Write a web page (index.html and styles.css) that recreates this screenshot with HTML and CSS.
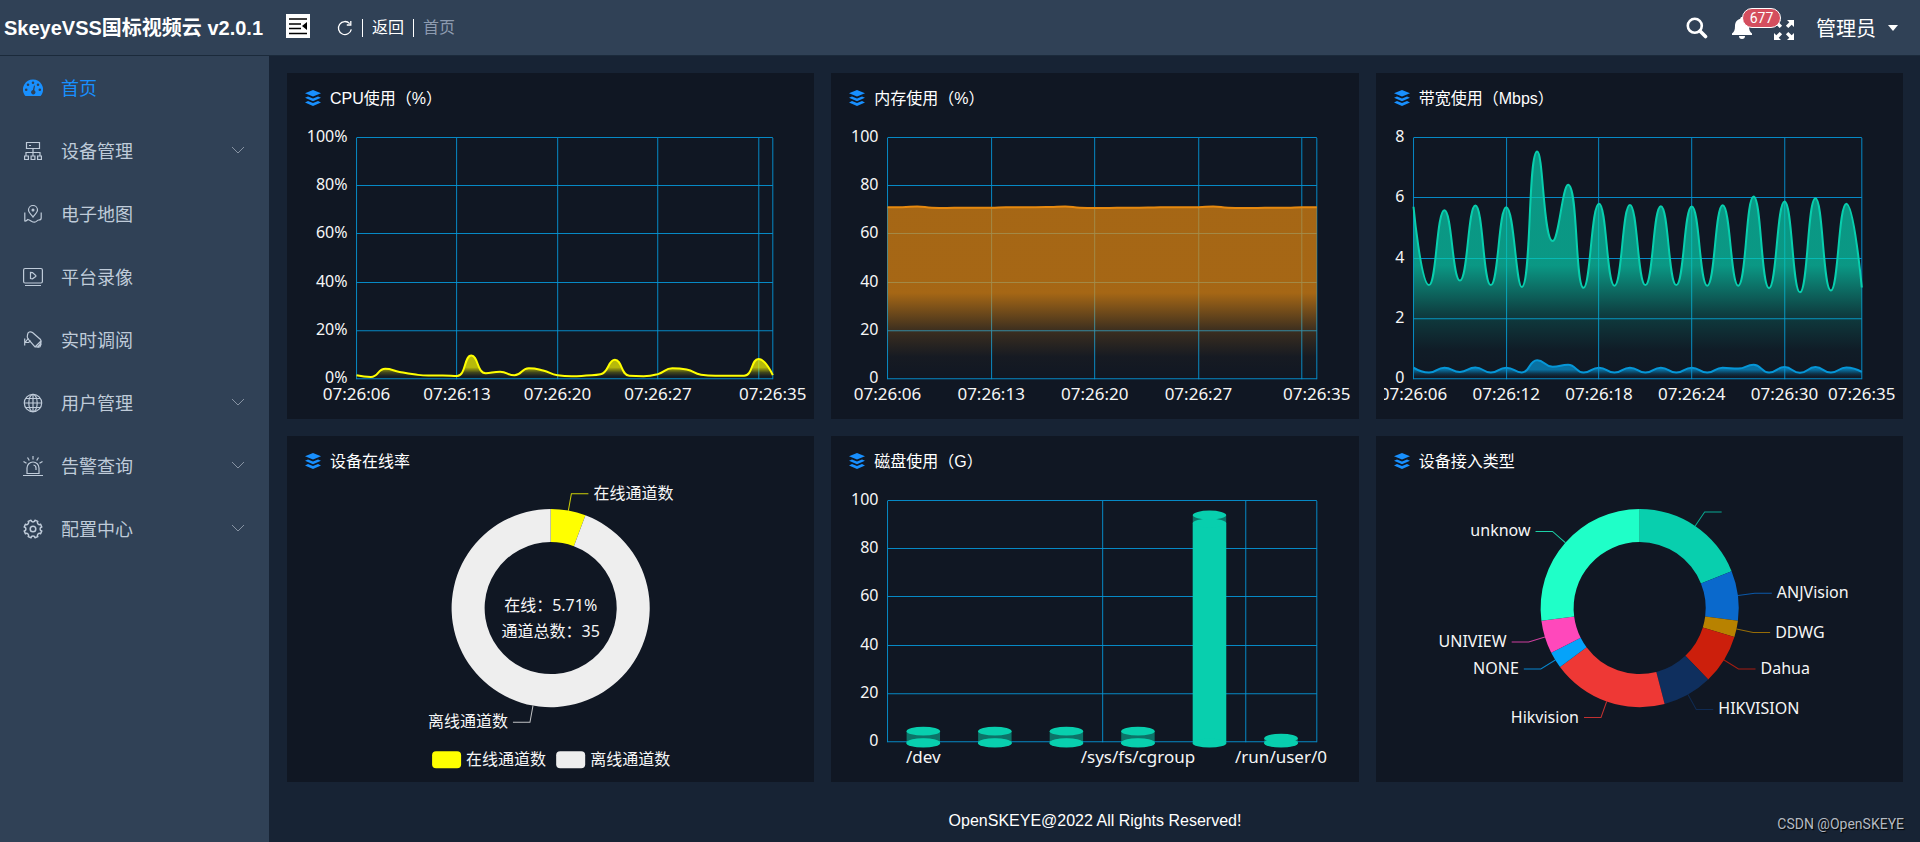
FILE: index.html
```html
<!DOCTYPE html>
<html lang="zh-CN">
<head>
<meta charset="utf-8">
<title>SkeyeVSS国标视频云</title>
<link rel="stylesheet" href="styles.css">
</head>
<body>
<svg class="sprite" aria-hidden="true">
  <symbol id="i-layers" viewBox="0 0 16 16"><path d="M8 0 16 3.200 8 6.600 0 3.200Z"/><path d="M0 7.800 3 6.400 8 8.400 13 6.400 16 7.800 8 11.300Z"/><path d="M0 12.400 3 11 8 13.100 13 11 16 12.400 8 16Z"/></symbol>
  <symbol id="i-chevron" viewBox="0 0 14 8"><path d="M1 1 7 7 13 1" fill="none" stroke="currentColor"/></symbol>
</svg>

<header class="topbar">
  <h1 class="brand">SkeyeVSS国标视频云 v2.0.1</h1>
  <button class="icon-btn fold" aria-label="折叠菜单">
    <svg width="24" height="24" viewBox="0 0 24 24"><path fill="#fff" d="M0 0h24v24H0z"/><path d="M3 5h18M3 10h12M3 14.500h12M3 19.500h18" stroke="#000" stroke-width="1.700"/><path d="M21 8v8l-5-4z"/></svg>
  </button>
  <nav class="crumbs">
    <button class="icon-btn" aria-label="刷新">
      <svg width="16" height="16" viewBox="0 0 16 16" fill="none" stroke="#fff" stroke-width="1.300"><path d="M14.300 9.300A6.500 6.500 0 1 1 12.700 3.600"/><path d="M13.800 1v4h-4"/></svg>
    </button>
    <a class="crumb" href="#back">返回</a>
    <span class="crumb current">首页</span>
  </nav>
  <div class="tools">
    <button class="icon-btn" aria-label="搜索">
      <svg width="22" height="22" viewBox="0 0 22 22" fill="none" stroke="#fff"><circle cx="8.800" cy="8.800" r="7" stroke-width="2.600"/><path d="m14 14 5.500 5.500" stroke-width="3.600" stroke-linecap="round"/></svg>
    </button>
    <button class="icon-btn bell" aria-label="通知">
      <svg width="20" height="22" viewBox="0 0 20 22" fill="#fff"><path d="M10 0c1 0 1.700.7 1.700 1.700C15 2.500 17 5.200 17 9c0 4 1 6 3 7.500V18H0v-1.500C2 15 3 13 3 9c0-3.800 2-6.500 5.300-7.300C8.300.7 9 0 10 0zM7 19h6a3 3 0 0 1-6 0z"/></svg>
      <span class="badge">677</span>
    </button>
    <button class="icon-btn expand" aria-label="全屏">
      <svg width="20" height="20" viewBox="0 0 20 20" fill="#fff"><path d="M20 0v7l-2.300-2.300-3.400 3.400-2.400-2.400 3.400-3.400L13 0z"/><path d="M0 0v7l2.300-2.300 3.400 3.400 2.400-2.400-3.400-3.400L7 0z"/><path d="M20 20v-7l-2.300 2.300-3.400-3.400-2.400 2.400 3.400 3.400L13 20z"/><path d="M0 20v-7l2.300 2.300 3.400-3.400 2.400 2.400-3.400 3.400L7 20z"/></svg>
    </button>
    <button class="icon-btn user">管理员
      <svg width="10" height="6" viewBox="0 0 10 6" fill="#fff"><path d="M0 0h10L5 6z"/></svg>
    </button>
  </div>
</header>

<div class="shell">
  <aside class="sidebar">
    <nav class="menu">
      <a class="item active" href="#home">
        <svg class="ico" viewBox="0 0 20 20"><path fill="currentColor" fill-rule="evenodd" d="M10 1.500a10 10 0 0 0-8.700 15c.4.800.9 1.500 1.700 1.500h14c.8 0 1.300-.7 1.700-1.500A10 10 0 0 0 10 1.500zM10 3.500a1.300 1.300 0 1 1 0 2.600 1.300 1.300 0 0 1 0-2.600zM5 5.500a1.300 1.300 0 1 1 0 2.600 1.300 1.300 0 0 1 0-2.600zM15 5.500a1.300 1.300 0 1 1 0 2.600 1.300 1.300 0 0 1 0-2.600zM3.200 10.500a1.300 1.300 0 1 1 0 2.600 1.300 1.300 0 0 1 0-2.600zM16.800 10.500a1.300 1.300 0 1 1 0 2.600 1.300 1.300 0 0 1 0-2.600zM11 7.500l1 .2-.7 4.600a2.200 2.200 0 1 1-1.400-.2z"/></svg>首页</a>
      <a class="item" href="#device">
        <svg class="ico" viewBox="0 0 20 20"><path d="M3.500 1.500h13v6h-13zM6 4.500h2M10 7.500V15M3 15v-3.500h14V15M1.600 15h3.800v3.500H1.600zM8.100 15h3.800v3.500H8.100zM14.600 15h3.800v3.500h-3.800z"/></svg>设备管理<svg class="chev"><use href="#i-chevron"/></svg></a>
      <a class="item" href="#map">
        <svg class="ico" viewBox="0 0 20 20"><path d="M10 13C7 9.500 5.500 8 5.500 6a4.500 4.500 0 0 1 9 0c0 2-1.500 3.500-4.500 7zM1.800 8.500v8.500c1 .3 1.700 0 3-1.500 3 .5 4 3 7 2.700 1.500-.2 2.500-2.200 4-2.200 2 0 2.400-1 2.400-2V8.500"/><circle cx="10" cy="6" r=".9"/></svg>电子地图</a>
      <a class="item" href="#record">
        <svg class="ico" viewBox="0 0 20 20"><rect x=".6" y="1.500" width="18.800" height="14.500" rx="1.500"/><path d="M7.500 5.500v6l2 .3 3.300-2.300v-1L9.500 5.600zM2 18.500h16"/></svg>平台录像</a>
      <a class="item" href="#live">
        <svg class="ico" viewBox="0 0 20 20"><path d="M4.500 5C4.500 2 7.500 1 9.500 2.500l8 7c1.500 2 .5 3.500-.5 5l-2.500 2.500-2.500-.2-7-8C4 7.500 4 6.500 4.500 5zM1.700 8.500v7M1.700 12.500h4l1.800-2M5.500 8l-3 4M17.500 11.500l-5 5M14.500 17.300l2.500-.5 1.300-3.300"/></svg>实时调阅</a>
      <a class="item" href="#users">
        <svg class="ico" viewBox="0 0 20 20"><circle cx="10" cy="10" r="8.700"/><ellipse cx="10" cy="10" rx="4.200" ry="8.700"/><path d="M10 1.300v17.400M1.300 10h17.400M2.800 5.500h14.400M2.800 14.500h14.400"/></svg>用户管理<svg class="chev"><use href="#i-chevron"/></svg></a>
      <a class="item" href="#alarm">
        <svg class="ico" viewBox="0 0 20 20"><path d="M4 17.500V12a6 6 0 0 1 12 0v5.500zM0 19.500h20M10 0v3.500M4.500 1.500l1.800 3M15.500 1.500l-1.800 3M.5 5.500l3 1.800M19.500 5.500l-3 1.800M10.500 9a3 3 0 0 1 2.500 3v2"/></svg>告警查询<svg class="chev"><use href="#i-chevron"/></svg></a>
      <a class="item" href="#config">
        <svg class="ico" viewBox="0 0 20 20"><path stroke-width="1.500" stroke-linejoin="round" d="M8 1.200C8.300 3.500 11.700 3.500 12 1.200L14.800 2.400C13.400 4.200 15.800 6.600 17.600 5.200L18.800 8C16.500 8.300 16.500 11.700 18.800 12L17.600 14.800C15.800 13.400 13.400 15.800 14.800 17.600L12 18.800C11.700 16.500 8.300 16.500 8 18.800L5.200 17.600C6.600 15.800 4.200 13.400 2.400 14.800L1.200 12C3.500 11.700 3.500 8.300 1.200 8L2.400 5.200C4.200 6.600 6.600 4.200 5.200 2.400Z"/><circle cx="10" cy="10" r="2.800" stroke-width="1.500"/></svg>配置中心<svg class="chev"><use href="#i-chevron"/></svg></a>
    </nav>
  </aside>

  <main class="content">
    <div class="grid">
      <section class="card"><h2 class="card-title"><svg><use href="#i-layers"/></svg>CPU使用（%）</h2><svg class="chart" id="cpu" viewBox="0 0 511 304"></svg></section>
      <section class="card"><h2 class="card-title"><svg><use href="#i-layers"/></svg>内存使用（%）</h2><svg class="chart" id="mem" viewBox="0 0 511 304"></svg></section>
      <section class="card"><h2 class="card-title"><svg><use href="#i-layers"/></svg>带宽使用（Mbps）</h2><svg class="chart" id="net" viewBox="0 0 511 304"></svg></section>
      <section class="card"><h2 class="card-title"><svg><use href="#i-layers"/></svg>设备在线率</h2><svg class="chart" id="online" viewBox="0 0 511 304"></svg></section>
      <section class="card"><h2 class="card-title"><svg><use href="#i-layers"/></svg>磁盘使用（G）</h2><svg class="chart" id="disk" viewBox="0 0 511 304"></svg></section>
      <section class="card"><h2 class="card-title"><svg><use href="#i-layers"/></svg>设备接入类型</h2><svg class="chart" id="types" viewBox="0 0 511 304"></svg></section>
    </div>
    <footer class="footer">OpenSKEYE@2022 All Rights Reserved!</footer>
  </main>
</div>
<div class="watermark">CSDN @OpenSKEYE</div>
<script src="charts.js"></script>
</body>
</html>
```
FILE: styles.css
```css
* { box-sizing: border-box; }
body {
  margin: 0;
  min-height: 100vh;
  display: flex;
  flex-direction: column;
  position: relative;
  background: #172334;
  color: #fff;
  font-family: "Liberation Sans", "Noto Sans CJK SC", sans-serif;
  font-size: 16px;
}
a { color: inherit; text-decoration: none; }
.sprite { display: none; }

.topbar {
  display: flex;
  align-items: center;
  height: 56px;
  background: #304156;
  border-bottom: 1px solid #1b2a3b;
}
.brand { margin: 0; padding-left: 4px; width: 286px; font-size: 20px; line-height: 28px; white-space: nowrap; }
.icon-btn {
  display: flex;
  align-items: center;
  padding: 0;
  border: 0;
  background: none;
  color: #fff;
  font: inherit;
  cursor: pointer;
}
.fold { margin: 0 27px 4px 0; }
.crumbs { display: flex; align-items: center; gap: 9px; }
.crumb { display: flex; align-items: center; line-height: 20px; }
.crumb::before { content: ""; width: 1px; height: 18px; margin-right: 9px; background: #fff; }
.current { color: #8d9bb0; }
.tools { display: flex; align-items: center; margin-left: auto; padding-right: 22px; }
.bell { position: relative; margin-left: 24px; }
.badge {
  position: absolute;
  left: 10px;
  top: -9px;
  width: 39px;
  height: 20px;
  border: 1px solid #fff;
  border-radius: 10px;
  background: #d44e5e;
  font-family: Roboto, "Liberation Sans", sans-serif;
  font-size: 14px;
  line-height: 18px;
  text-align: center;
}
.expand { margin: 4px 22px 0 22px; }
.user { gap: 12px; font-size: 20px; }

.shell { display: flex; flex: 1; }
.sidebar { flex: none; width: 269px; background: #304156; }
.menu { display: flex; flex-direction: column; }
.item {
  display: flex;
  align-items: center;
  height: 63px;
  padding: 0 24px 2px 23px;
  color: #bfcbd9;
  font-size: 18px;
}
.item.active { color: #1890ff; }
.ico { width: 20px; height: 20px; margin: 3px 18px 0 0; fill: none; stroke: currentColor; stroke-width: 1.2; }
.active .ico { stroke: none; }
.chev { width: 14px; height: 8px; margin-left: auto; color: #8793a3; }

.content { flex: 1; min-width: 0; display: flex; flex-direction: column; padding: 17px 17px 0 18px; }
.grid { display: grid; grid-template-columns: repeat(3, minmax(0, 1fr)); gap: 17px; }
.card { background: #101723; padding: 0 8px; }
.card-title {
  display: flex;
  align-items: center;
  gap: 9px;
  margin: 0;
  padding: 6px 0 0 10px;
  height: 42px;
  font-size: 16px;
  font-weight: 400;
}
.card-title svg { width: 16px; height: 16px; margin-top: 2px; fill: #1890ff; }
.chart { display: block; width: 100%; height: auto; }
.chart text { fill: #f6f6f6; font-family: "Noto Sans", "Noto Sans CJK SC", sans-serif; font-size: 16px; }
.chart .x-label { font-size: 17px; }
.chart .grid-line { stroke: #0696d7; stroke-opacity: 0.9; fill: none; }
.footer { padding: 27px 0 8px; text-align: center; line-height: 24px; }
.watermark {
  position: absolute;
  right: 16px;
  bottom: 8px;
  color: #b4bac2;
  font-family: Roboto, sans-serif;
  font-size: 14px;
  line-height: 20px;
  text-shadow: 1px 1px 1px #000;
}
```
FILE: charts.js
```js
const NS = 'http://www.w3.org/2000/svg';
const TOP = 23, BOTTOM = 264, RIGHT = 477.5;

function add(parent, tag, attrs, text) {
  const el = document.createElementNS(NS, tag);
  for (const k in attrs) el.setAttribute(k, attrs[k]);
  if (text) el.textContent = text;
  parent.appendChild(el);
  return el;
}

function label(svg, x, y, anchor, text, cls) {
  add(svg, 'text', { x, y: y + 6, 'text-anchor': anchor, class: cls || '' }, text);
}

function axes(svg, left, yLabels, xs) {
  const n = yLabels.length - 1;
  yLabels.forEach((t, i) => {
    const y = Math.round(BOTTOM - (BOTTOM - TOP) * i / n) - 0.5;
    add(svg, 'path', { class: 'grid-line', d: `M${left} ${y}H${RIGHT}` });
    label(svg, left - 9, y - 1.5, 'end', t);
  });
  xs.forEach(x => {
    const px = Math.floor(x) + 0.5;
    add(svg, 'path', { class: 'grid-line', d: `M${px} ${TOP}V${BOTTOM}` });
  });
}

// Smooth path whose control points never overshoot the neighbouring points.
function smooth(p) {
  const k = 0.5;
  let d = `M${p[0][0]} ${p[0][1]}`;
  let c0 = p[0];
  for (let i = 1; i < p.length; i++) {
    const [x, y] = p[i];
    let prev = [x, y], next = [x, y];
    if (i < p.length - 1) {
      const a = p[i - 1], b = p[i + 1];
      const vx = b[0] - a[0], vy = b[1] - a[1];
      const lp = Math.hypot(x - a[0], y - a[1]);
      const ln = Math.hypot(b[0] - x, b[1] - y);
      const r = ln / (ln + lp);
      const clamp = (v, s, t) => Math.max(Math.min(v, Math.max(s, t)), Math.min(s, t));
      next = [clamp(x + vx * k * r, b[0], x), clamp(y + vy * k * r, b[1], y)];
      prev = [x - (next[0] - x) * lp / ln, y - (next[1] - y) * lp / ln];
      prev = [clamp(prev[0], a[0], x), clamp(prev[1], a[1], y)];
      next = [x + (x - prev[0]) * ln / lp, y + (y - prev[1]) * ln / lp];
    }
    d += `C${c0[0]} ${c0[1]} ${prev[0]} ${prev[1]} ${x} ${y}`;
    c0 = next;
  }
  return d;
}

function gradient(svg, id, color) {
  const g = add(svg, 'linearGradient', { id, x1: 0, y1: 0, x2: 0, y2: 1 });
  [[0, 0.7], [0.5, 0.7], [0.72, 0.2], [0.87, 0.03], [1, 0]].forEach(([o, a]) =>
    add(g, 'stop', { offset: o, 'stop-color': color, 'stop-opacity': a }));
}

function lineChart(id, left, yLabels, max, step, series) {
  const svg = document.getElementById(id);
  const dx = (RIGHT - left) / 29;
  const xs = [];
  for (let i = 0; i < 30; i += step) xs.push(left + dx * i);
  axes(svg, left, yLabels, xs.concat(RIGHT));
  series.forEach(([color, data], n) => {
    const pts = data.map((v, i) => [left + dx * i, BOTTOM - (BOTTOM - TOP) * v / max]);
    const d = smooth(pts);
    gradient(svg, id + n, color);
    add(svg, 'path', { d: `${d}V${BOTTOM}H${left}Z`, fill: `url(#${id}${n})` });
    add(svg, 'path', { d, fill: 'none', stroke: color, 'stroke-width': 2 });
  });
  const ticks = [];
  for (let i = 0; i < 26; i += step) ticks.push(i);
  ticks.concat(29).forEach(i =>
    label(svg, left + dx * i, 279, 'middle', '07:26:' + String(6 + i).padStart(2, '0'), 'x-label'));
}

lineChart('cpu', 61.5, ['0%', '20%', '40%', '60%', '80%', '100%'], 100, 7, [['#ffff00',
  [1.6, 0.9, 4.3, 3, 2, 1.5, 1.5, 1.3, 9.8, 2.5, 3.1, 1.6, 4.5, 3.6, 1.6, 1.2, 1.5, 2, 8, 1.4, 1.2, 2.1, 4.5, 4, 1.8, 1.4, 1.4, 1.4, 8.4, 1.7]]]);

lineChart('mem', 48.5, ['0', '20', '40', '60', '80', '100'], 100, 7, [['#e6890f',
  [71.3, 71.3, 71.6, 71.1, 71, 71.1, 71.1, 71.1, 71.3, 71.3, 71.3, 71.4, 71.6, 71.1, 71, 71, 71.1, 71.1, 71.2, 71.3, 71.3, 71.3, 71.6, 71.1, 71, 71, 71.1, 71.1, 71.3, 71.3]]]);

lineChart('net', 29.5, ['0', '2', '4', '6', '8'], 8, 6, [
  ['#08cfae', [5.72, 3.12, 5.6, 3.27, 5.76, 3.12, 5.7, 3.06, 7.55, 4.58, 6.45, 3.03, 5.82, 3.1, 5.78, 3.12, 5.74, 3.12, 5.73, 3.1, 5.77, 3.1, 6.06, 3.02, 5.89, 2.88, 6, 2.94, 5.82, 3.04]],
  ['#0696d7', [0.38, 0.22, 0.38, 0.24, 0.39, 0.22, 0.38, 0.22, 0.63, 0.41, 0.48, 0.22, 0.38, 0.22, 0.38, 0.22, 0.38, 0.22, 0.38, 0.22, 0.38, 0.35, 0.48, 0.22, 0.4, 0.21, 0.4, 0.22, 0.39, 0.24]]]);

function pie(id, data) {
  const svg = document.getElementById(id);
  const cx = 255.5, cy = 130, R = 99, r = 66;
  const total = data.reduce((s, e) => s + e[1], 0);
  const at = (a, q) => [cx + Math.sin(a) * q, cy - Math.cos(a) * q];
  let a = 0;
  data.forEach(([name, v, color]) => {
    const b = a + v / total * Math.PI * 2, m = (a + b) / 2;
    const big = b - a > Math.PI ? 1 : 0;
    add(svg, 'path', { fill: color, d: `M${at(a, R)}A${R} ${R} 0 ${big} 1 ${at(b, R)}L${at(b, r)}A${r} ${r} 0 ${big} 0 ${at(a, r)}Z` });
    const side = Math.sin(m) > 0 ? 1 : -1;
    const [x, y] = at(m, R + 17);
    add(svg, 'path', { d: `M${at(m, R)}L${x} ${y}h${17 * side}`, fill: 'none', stroke: color, 'stroke-opacity': 0.8 });
    if (name) label(svg, x + 22 * side, y - 1, side > 0 ? 'start' : 'end', name);
    a = b;
  });
  return svg;
}

const online = pie('online', [['在线通道数', 5.71, '#ffff00'], ['离线通道数', 94.29, '#eeeeee']]);
label(online, 255.5, 127, 'middle', '在线：5.71%');
label(online, 255.5, 153, 'middle', '通道总数：35');
[[137, '#ffff00', '在线通道数'], [261, '#eeeeee', '离线通道数']].forEach(([x, fill, t]) => {
  add(online, 'rect', { x, y: 273, width: 29, height: 17, rx: 4, fill });
  label(online, x + 34, 281, 'start', t);
});

pie('types', [['', 7, '#08cfae'], ['ANJVision', 3, '#0a69cc'], ['DDWG', 1, '#b88200'], ['Dahua', 3, '#cc1f0c'],
  ['HIKVISION', 3, '#0f2f5e'], ['Hikvision', 7, '#ee3835'], ['NONE', 1, '#05a3fa'], ['UNIVIEW', 2, '#ff48bb'], ['unknow', 10, '#1fffc8']]);

const disk = document.getElementById('disk');
axes(disk, 48.5, ['0', '20', '40', '60', '80', '100'], [48.5, 263, 406, RIGHT]);
// Each cylinder: centre y of the cap, centre y of the filled part.
[[253, 264.5], [253, 264.5], [253, 264.5], [253, 264.5], [37, 45], [260, 264.5]].forEach(([cap, fillTop], i) => {
  const cx = 48.5 + 71.5 * (i + 0.5), w = 33.4, fill = '#08cfae';
  const ring = cy => add(disk, 'ellipse', { cx, cy, rx: w / 2, ry: 4.4, fill });
  add(disk, 'rect', { x: cx - w / 2, y: cap, width: w, height: 265 - cap, fill, 'fill-opacity': 0.5 });
  add(disk, 'rect', { x: cx - w / 2, y: fillTop, width: w, height: 265 - fillTop, fill });
  ring(265);
  ring(fillTop);
  ring(cap);
});
[['/dev', 0], ['/sys/fs/cgroup', 3], ['/run/user/0', 5]].forEach(([t, i]) =>
  label(disk, 48.5 + 71.5 * (i + 0.5), 279, 'middle', t, 'x-label'));
```
